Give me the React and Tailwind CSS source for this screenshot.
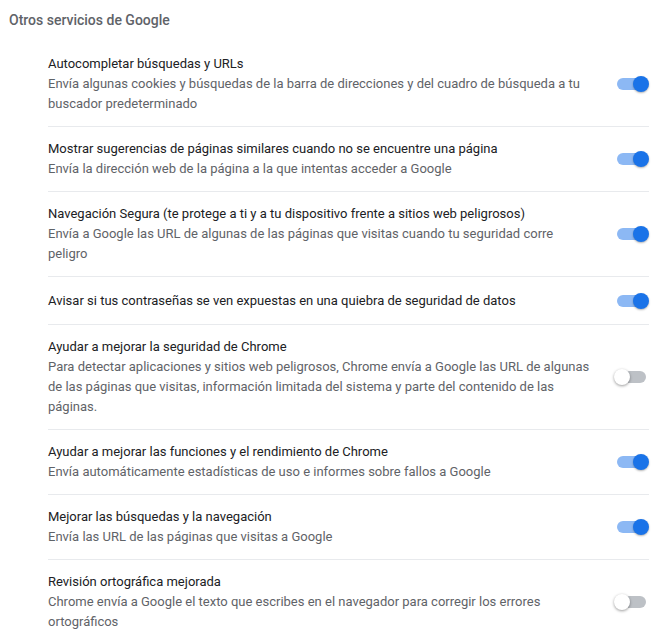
import { useState } from 'react'

const OPCIONES = [
  {
    id: 'autocompletar',
    titulo: 'Autocompletar búsquedas y URLs',
    sub: 'Envía algunas cookies y búsquedas de la barra de direcciones y del cuadro de búsqueda a tu buscador predeterminado',
    on: true,
  },
  {
    id: 'sugerencias',
    titulo: 'Mostrar sugerencias de páginas similares cuando no se encuentre una página',
    sub: 'Envía la dirección web de la página a la que intentas acceder a Google',
    on: true,
  },
  {
    id: 'segura',
    titulo: 'Navegación Segura (te protege a ti y a tu dispositivo frente a sitios web peligrosos)',
    sub: 'Envía a Google las URL de algunas de las páginas que visitas cuando tu seguridad corre peligro',
    on: true,
  },
  {
    id: 'contrasenas',
    titulo: 'Avisar si tus contraseñas se ven expuestas en una quiebra de seguridad de datos',
    sub: null,
    on: true,
  },
  {
    id: 'seguridad',
    titulo: 'Ayudar a mejorar la seguridad de Chrome',
    sub: 'Para detectar aplicaciones y sitios web peligrosos, Chrome envía a Google las URL de algunas de las páginas que visitas, información limitada del sistema y parte del contenido de las páginas.',
    on: false,
  },
  {
    id: 'rendimiento',
    titulo: 'Ayudar a mejorar las funciones y el rendimiento de Chrome',
    sub: 'Envía automáticamente estadísticas de uso e informes sobre fallos a Google',
    on: true,
  },
  {
    id: 'busquedas',
    titulo: 'Mejorar las búsquedas y la navegación',
    sub: 'Envía las URL de las páginas que visitas a Google',
    on: true,
  },
  {
    id: 'ortografia',
    titulo: 'Revisión ortográfica mejorada',
    sub: 'Chrome envía a Google el texto que escribes en el navegador para corregir los errores ortográficos',
    on: false,
  },
]

function Toggle({ on, onClick }) {
  return (
    <button onClick={onClick} className="relative w-[35px] h-4 shrink-0 flex items-center">
      <span className={`block ml-[3px] w-[29px] h-3 rounded-full ${on ? 'bg-[#8cb8f4]' : 'bg-[#bdc1c6]'}`} />
      <span
        className={`absolute top-0 w-4 h-4 rounded-full ${
          on ? 'right-0 bg-[#1a73e8] shadow-[0_1px_2px_rgba(0,0,0,0.3)]' : 'left-0 bg-white shadow-[0_1px_3px_rgba(0,0,0,0.4)]'
        }`}
      />
    </button>
  )
}

export default function App() {
  const [estado, setEstado] = useState(() =>
    Object.fromEntries(OPCIONES.map(o => [o.id, o.on]))
  )

  return (
    <div className="min-h-screen bg-white font-['Roboto','Liberation_Sans',sans-serif] text-[13px] leading-5">

      {/* Encabezado */}
      <div className="pl-[9px] pt-[10px] pb-3 text-[14px] font-medium text-[#5f6368]">
        Otros servicios de Google
      </div>

      {/* Lista */}
      <div className="ml-12 mr-3">
        {OPCIONES.map((o, i) => (
          <div key={o.id}
            className={`flex items-center min-h-12 py-3 ${i > 0 ? 'border-t border-[#e8eaed]' : ''}`}
          >
            <div className="flex-1 pr-[21px]">
              <div className="text-[#202124]">{o.titulo}</div>
              {o.sub && <div className="text-[#5f6368]">{o.sub}</div>}
            </div>
            <Toggle on={estado[o.id]} onClick={() => setEstado(s => ({ ...s, [o.id]: !s[o.id] }))} />
          </div>
        ))}
      </div>
    </div>
  )
}
